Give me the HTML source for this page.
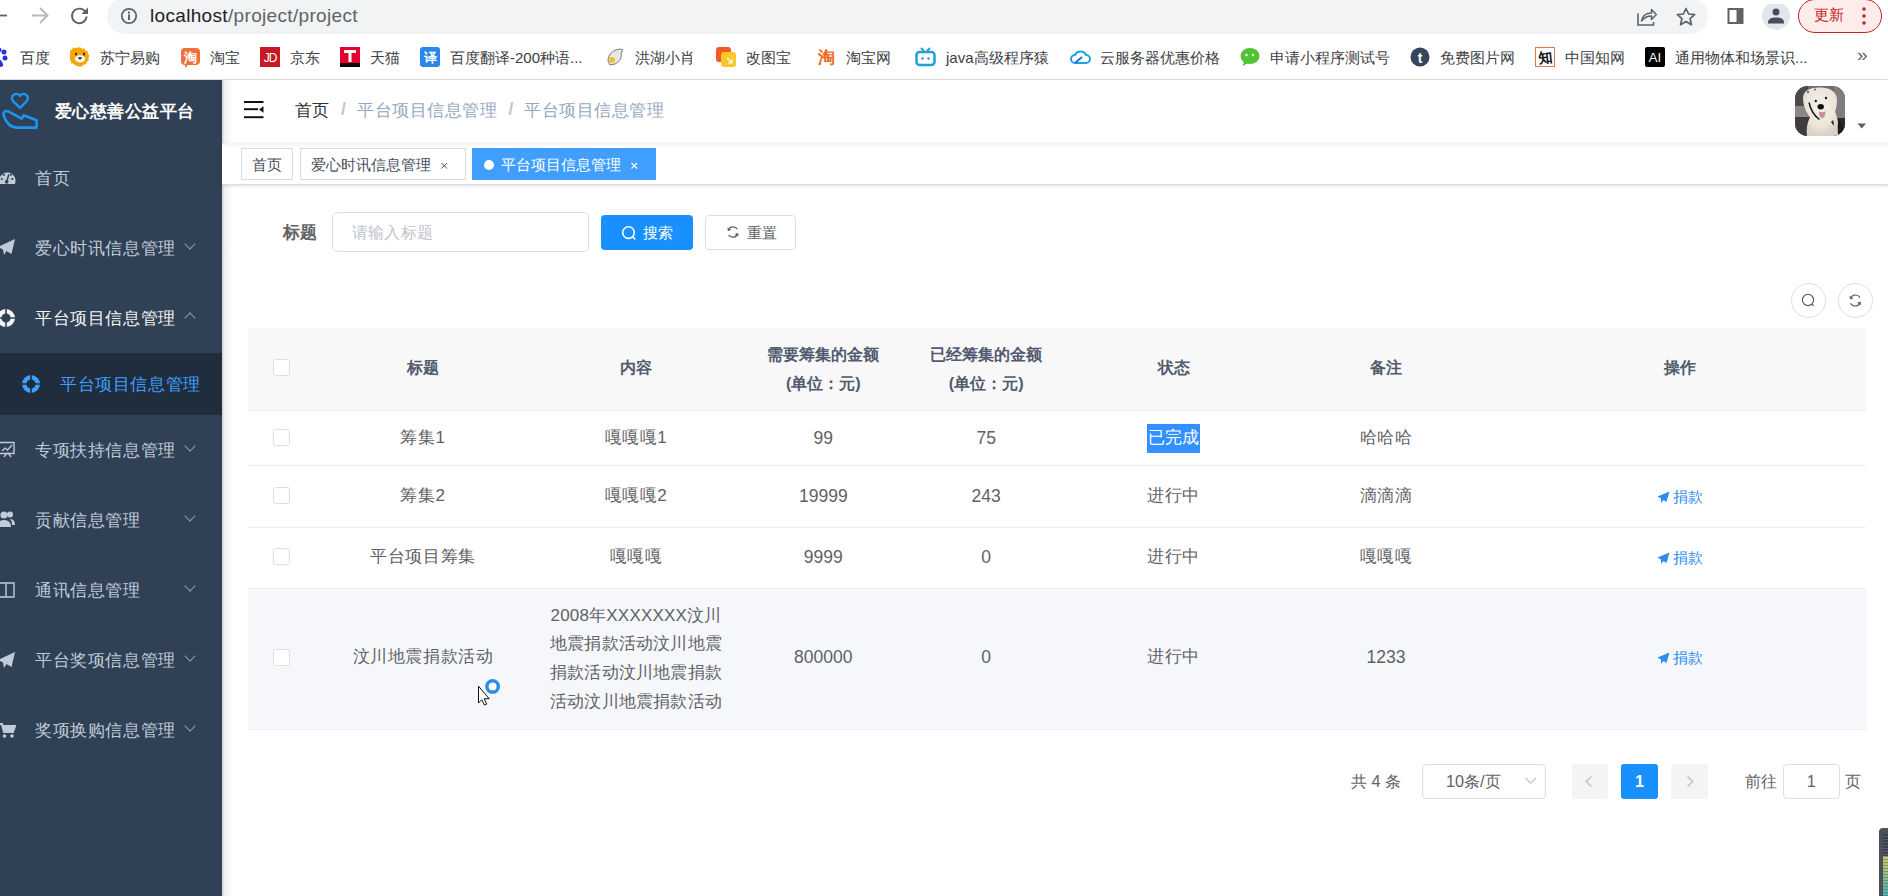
<!DOCTYPE html>
<html><head><meta charset="utf-8">
<style>
*{box-sizing:border-box;margin:0;padding:0}
html,body{width:1888px;height:896px;overflow:hidden;background:#fff;font-family:"Liberation Sans",sans-serif;position:relative}
.a{position:absolute}
.t{white-space:nowrap;line-height:1}
/* browser */
#tb{left:0;top:0;width:1888px;height:36px;background:#fff}
#omni{left:107px;top:-2px;width:1601px;height:36px;border-radius:18px;background:#f1f3f4}
#bm{left:0;top:36px;width:1888px;height:44px;background:#fff;border-bottom:1px solid #dedede}
.bmt{font-size:15px;color:#3c4043;top:49.8px}
/* app */
#side{left:0;top:80px;width:222px;height:816px;background:#304156}
.mi{left:35px;font-size:17px;letter-spacing:0.6px;color:#bfcbd9}
.chev{width:8px;height:8px;border-right:1px solid #909aa6;border-bottom:1px solid #909aa6;transform:rotate(45deg)}
</style></head><body>
<!-- ===== browser toolbar ===== -->
<div class="a" id="tb"></div>
<svg class="a" style="left:0;top:0" width="100" height="36">
  <path d="M-4 15.5H7" stroke="#5f6368" stroke-width="1.8" fill="none"/>
  <path d="M32 15.5H47M40 8l7.5 7.5L40 23" stroke="#b4b6b8" stroke-width="1.8" fill="none"/>
  <path d="M85.5 12A7.3 7.3 0 1 0 86.6 16.5" stroke="#5f6368" stroke-width="1.9" fill="none"/>
  <path d="M88 7.5v6.5h-6.5z" fill="#5f6368"/>
</svg>
<div class="a" id="omni"></div>
<svg class="a" style="left:118px;top:5px" width="22" height="22">
  <circle cx="11" cy="11" r="7.2" stroke="#5f6368" stroke-width="1.8" fill="none"/>
  <rect x="10" y="9.5" width="2" height="5.5" fill="#5f6368"/><rect x="10" y="6.5" width="2" height="2" fill="#5f6368"/>
</svg>
<div class="a t" style="left:150px;top:6px;font-size:19px;letter-spacing:0.33px;color:#202124">localhost<span style="color:#5f6368">/project/project</span></div>

<!-- ===== bookmarks ===== -->
<div class="a" id="bm"></div>
<svg class="a" style="left:0;top:46px" width="10" height="22"><circle cx="4" cy="6" r="2.5" fill="#2932e1"/><circle cx="-1" cy="4" r="2.5" fill="#2932e1"/><circle cx="5" cy="12" r="2.5" fill="#2932e1"/><path d="M-3 12c3 0 5 3 6 6s-2 3-4 3-6-1-6-3 1-6 4-6z" fill="#2932e1"/></svg>
<div class="a t bmt" style="left:20px">百度</div>
<svg class="a" style="left:70px;top:47px" width="20" height="20"><path d="M10 0.3l2 1.4 2.4-.3 1.2 2.1 2.2 1 .1 2.4 1.5 1.9-1 2.2.4 2.4-2 1.3-.6 2.4-2.4.4-1.6 1.8L10 19.7l-2.2-.8-2.4-.4-1.6-1.8-2.4-.4-.6-2.4-2-1.3.4-2.4-1-2.2 1.5-1.9.1-2.4 2.2-1 1.2-2.1 2.4.3z" fill="#f5a60a"/><ellipse cx="10" cy="11.8" rx="5.2" ry="3.6" fill="#fff"/><ellipse cx="6" cy="7" rx="1" ry="1.5" fill="#2a2a2a"/><ellipse cx="14" cy="7" rx="1" ry="1.5" fill="#2a2a2a"/><path d="M7.7 10.3h4.6L10 13z" fill="#1a1a1a"/></svg>
<div class="a t bmt" style="left:100px">苏宁易购</div>
<svg class="a" style="left:180px;top:47px" width="20" height="21"><path d="M4 1h12a4 4 0 0 1 4 4v9a4 4 0 0 1-4 4H8l-3 3v-3a4 4 0 0 1-4-4V5a4 4 0 0 1 3-4z" fill="#f2703a"/><text x="10" y="15" font-size="13" font-weight="bold" fill="#fff" text-anchor="middle">淘</text></svg>
<div class="a t bmt" style="left:210px">淘宝</div>
<svg class="a" style="left:260px;top:47px" width="20" height="20"><rect width="20" height="20" fill="#c71a25"/><text x="10" y="15" font-size="12" font-family="Liberation Sans" fill="#fff" text-anchor="middle" letter-spacing="-1">JD</text></svg>
<div class="a t bmt" style="left:290px">京东</div>
<svg class="a" style="left:340px;top:47px" width="20" height="20"><rect width="20" height="17" fill="#e5002d"/><rect y="16" width="20" height="4" fill="#0a0a0a"/><path d="M4 3h12v3h-4.5v9h-3V6H4z" fill="#fff"/></svg>
<div class="a t bmt" style="left:370px">天猫</div>
<svg class="a" style="left:420px;top:47px" width="20" height="20"><rect width="20" height="20" rx="3" fill="#2b87e8"/><text x="10" y="15" font-size="13" font-weight="bold" fill="#fff" text-anchor="middle">译</text></svg>
<div class="a t bmt" style="left:450px">百度翻译-200种语...</div>
<svg class="a" style="left:605px;top:47px" width="20" height="20"><path d="M3 14c0-6 4-11 12-12l3 1-2 3c1 4-1 9-6 11l-5 1z" fill="#e8e8e8" stroke="#777" stroke-width="1"/><circle cx="7" cy="13" r="3" fill="#f3c21c"/></svg>
<div class="a t bmt" style="left:635px">洪湖小肖</div>
<svg class="a" style="left:716px;top:47px" width="20" height="20"><rect x="0" y="0" width="15" height="15" rx="3" fill="#f25c22"/><rect x="5" y="5" width="15" height="15" rx="3" fill="#fdc629"/><path d="M11 11l5 5M16 12v4h-4" stroke="#fff" stroke-width="1.2" fill="none"/></svg>
<div class="a t bmt" style="left:746px">改图宝</div>
<svg class="a" style="left:817px;top:48px" width="19" height="18"><text x="9.5" y="15" font-size="17" font-weight="bold" fill="#f06a22" text-anchor="middle">淘</text></svg>
<div class="a t bmt" style="left:846px">淘宝网</div>
<svg class="a" style="left:915px;top:47px" width="21" height="20"><path d="M6 1l3 3M15 1l-3 3" stroke="#23a0d9" stroke-width="2"/><rect x="1.5" y="5" width="18" height="13" rx="3" stroke="#23a0d9" stroke-width="2.5" fill="none"/><circle cx="7.5" cy="11.5" r="1.3" fill="#23a0d9"/><circle cx="13.5" cy="11.5" r="1.3" fill="#23a0d9"/></svg>
<div class="a t bmt" style="left:946px">java高级程序猿</div>
<svg class="a" style="left:1070px;top:48px" width="21" height="18"><path d="M5 15a4 4 0 0 1 0-8 6 6 0 0 1 11 0 4 4 0 0 1 0 8z" stroke="#1fa3e8" stroke-width="2" fill="none"/><path d="M5 15l7-6" stroke="#1f6fe8" stroke-width="2"/></svg>
<div class="a t bmt" style="left:1100px">云服务器优惠价格</div>
<svg class="a" style="left:1240px;top:47px" width="20" height="20"><ellipse cx="10" cy="9" rx="9.5" ry="8" fill="#51c332"/><path d="M4 14l-1 5 5-3z" fill="#51c332"/><circle cx="6.5" cy="8" r="1.2" fill="#fff"/><circle cx="13" cy="8" r="1.2" fill="#fff"/></svg>
<div class="a t bmt" style="left:1270px">申请小程序测试号</div>
<svg class="a" style="left:1410px;top:47px" width="20" height="20"><circle cx="10" cy="10" r="9.5" fill="#35465c"/><text x="10" y="15.5" font-size="14" font-weight="bold" font-family="Liberation Sans" fill="#fff" text-anchor="middle">t</text></svg>
<div class="a t bmt" style="left:1440px">免费图片网</div>
<svg class="a" style="left:1535px;top:47px" width="20" height="20"><rect x="0.5" y="0.5" width="19" height="19" fill="#fff" stroke="#e07a45"/><text x="10" y="15.5" font-size="14" font-weight="bold" fill="#111" text-anchor="middle" transform="rotate(-6 10 10)">知</text></svg>
<div class="a t bmt" style="left:1565px">中国知网</div>
<svg class="a" style="left:1645px;top:47px" width="20" height="20"><rect width="20" height="20" rx="2" fill="#000"/><text x="10" y="15" font-size="13" font-family="Liberation Sans" fill="#fff" text-anchor="middle">AI</text></svg>
<div class="a t bmt" style="left:1675px">通用物体和场景识...</div>
<div class="a t" style="left:1857px;top:45px;font-size:19px;color:#5f6368">»</div>
<!-- right toolbar icons -->
<svg class="a" style="left:1630px;top:4px" width="250" height="32">
  <path d="M8 9.5v11.5h15.5v-3" stroke="#5f6368" stroke-width="1.6" fill="none"/>
  <path d="M11.5 17c1-5.5 4.5-8 10-8V5.5l4.8 5-4.8 5v-3.5c-4 0-7 1-10 5z" stroke="#5f6368" stroke-width="1.5" fill="none" stroke-linejoin="round"/>
  <path d="M56 4.5l2.6 5.5 6 .7-4.5 4 1.3 6-5.4-3.2-5.4 3.2 1.3-6-4.5-4 6-.7z" stroke="#5f6368" stroke-width="1.7" fill="none" stroke-linejoin="round"/>
  <rect x="97.5" y="4" width="16" height="16" fill="#5f6368"/><rect x="99.5" y="6" width="7" height="12" fill="#fff"/>
  <circle cx="146" cy="11.8" r="14" fill="#e3e6ea"/>
  <circle cx="146" cy="8" r="3.5" fill="#474f5d"/><path d="M138 18.5c0-4 4-5 8-5s8 1 8 5v1h-16z" fill="#474f5d"/>
</svg>
<div class="a" style="left:1798px;top:-1px;width:84px;height:34px;border-radius:17px;border:1.5px solid #c5221f;background:#fdecea"></div>
<div class="a t" style="left:1814px;top:7px;font-size:15px;color:#c5221f">更新</div>
<svg class="a" style="left:1860px;top:6px" width="8" height="22"><circle cx="4" cy="3" r="1.8" fill="#c5221f"/><circle cx="4" cy="10" r="1.8" fill="#c5221f"/><circle cx="4" cy="17" r="1.8" fill="#c5221f"/></svg>

<!-- ===== sidebar ===== -->
<div class="a" id="side"></div>
<svg class="a" style="left:0;top:90px" width="42" height="42">
  <path d="M19.9 17.8L13.3 11.3A4.3 4.3 0 1 1 19.9 5.9A4.3 4.3 0 1 1 26.5 11.3Z" stroke="#1c95ef" stroke-width="2.4" fill="none" stroke-linejoin="round"/>
  <path d="M3.6 25.5Q3 21.3 6.2 21.1Q8.3 21 11 22.8L21.8 28.6L23.6 25.3L36.6 30.2V37.6H16.5Q8 37.4 3.6 25.5Z" stroke="#1c95ef" stroke-width="2.6" fill="none" stroke-linejoin="round"/>
</svg>
<div class="a t" style="left:55px;top:102.5px;font-size:17px;letter-spacing:0.43px;font-weight:bold;color:#fff">爱心慈善公益平台</div>
<div class="a" style="left:0;top:352.5px;width:222px;height:62.5px;background:#1f2d3d"></div>

<svg class="a" style="left:0;top:168px" width="16" height="18"><path d="M-0.2 16A8.2 8.2 0 1 1 14.8 16Z" fill="#bfcbd9"/><circle cx="1.8" cy="11" r="1.1" fill="#304156"/><circle cx="3.8" cy="6.8" r="1.1" fill="#304156"/><circle cx="12.3" cy="11" r="1.1" fill="#304156"/><circle cx="10.8" cy="6.8" r="1.1" fill="#304156"/><path d="M8.8 6.5L6.9 13" stroke="#304156" stroke-width="1.4"/><circle cx="6.7" cy="13.8" r="1.9" fill="#304156"/></svg>
<div class="a t mi" style="top:169.7px">首页</div>

<svg class="a" style="left:0;top:238px" width="16" height="18"><path d="M15 1L-2 9l5 2.5zM15 1L3 11.5l1 5.5 2.5-4 5 3z" fill="#bfcbd9"/></svg>
<div class="a t mi" style="top:239.7px">爱心时讯信息管理</div>
<div class="a chev" style="left:186px;top:240px"></div>

<svg class="a" style="left:-4px;top:308px" width="20" height="20"><circle cx="10" cy="10" r="6.8" stroke="#f4f4f5" stroke-width="4.4" fill="none"/><path d="M10 0v20M0 10h20" stroke="#304156" stroke-width="1.6"/></svg>
<div class="a t mi" style="top:309.7px;color:#f4f4f5">平台项目信息管理</div>
<div class="a chev" style="left:186px;top:314px;transform:rotate(225deg)"></div>

<svg class="a" style="left:21px;top:373.5px" width="20" height="20"><circle cx="10" cy="10" r="6.8" stroke="#409eff" stroke-width="4.4" fill="none"/><path d="M10 0v20M0 10h20" stroke="#1f2d3d" stroke-width="1.6"/></svg>
<div class="a t mi" style="left:60px;top:375.7px;color:#409eff">平台项目信息管理</div>

<svg class="a" style="left:0;top:441px" width="16" height="18"><path d="M-1 1.5h15v11H-1" stroke="#bfcbd9" stroke-width="1.4" fill="none"/><path d="M2 10l3-3 2.5 2 4.5-5" stroke="#bfcbd9" stroke-width="1.3" fill="none"/><path d="M4 16l2.5-3.5h2L11 16" stroke="#bfcbd9" stroke-width="1.3" fill="none"/></svg>
<div class="a t mi" style="top:441.7px">专项扶持信息管理</div>
<div class="a chev" style="left:186px;top:442px"></div>

<svg class="a" style="left:0;top:510px" width="16" height="18"><circle cx="4" cy="5" r="3.6" fill="#bfcbd9"/><circle cx="10" cy="4.5" r="3" fill="#bfcbd9"/><path d="M-3 17c0-5 3-7 7-7s7 2 7 7z" fill="#bfcbd9"/><path d="M10 9c3 0 5 2 5 6h-3c0-3-1-5-2-6z" fill="#bfcbd9"/></svg>
<div class="a t mi" style="top:511.7px">贡献信息管理</div>
<div class="a chev" style="left:186px;top:512px"></div>

<svg class="a" style="left:0;top:581px" width="16" height="18"><path d="M-2 2h8v14h-8M6 2h8v14H6z" stroke="#bfcbd9" stroke-width="1.4" fill="none"/></svg>
<div class="a t mi" style="top:581.7px">通讯信息管理</div>
<div class="a chev" style="left:186px;top:582px"></div>

<svg class="a" style="left:0;top:651px" width="16" height="18"><path d="M15 1L-2 9l5 2.5zM15 1L3 11.5l1 5.5 2.5-4 5 3z" fill="#bfcbd9"/></svg>
<div class="a t mi" style="top:651.7px">平台奖项信息管理</div>
<div class="a chev" style="left:186px;top:652px"></div>

<svg class="a" style="left:0;top:721px" width="16" height="18"><path d="M-2 3h4l2 8h9l2-6H3" stroke="#bfcbd9" stroke-width="2" fill="#bfcbd9"/><circle cx="4.5" cy="15" r="1.8" fill="#bfcbd9"/><circle cx="12" cy="15" r="1.8" fill="#bfcbd9"/></svg>
<div class="a t mi" style="top:721.7px">奖项换购信息管理</div>
<div class="a chev" style="left:186px;top:722px"></div>

<!-- ===== navbar ===== -->
<div class="a" style="left:222px;top:80px;width:1666px;height:62.5px;background:#fff;box-shadow:0 1px 5px rgba(0,21,41,.08)"></div>
<div class="a" style="left:222px;top:80px;width:11px;height:816px;background:linear-gradient(90deg,rgba(0,21,41,.2) 0,rgba(0,21,41,.07) 2.5px,rgba(0,21,41,.03) 6px,rgba(0,21,41,0) 11px)"></div>
<svg class="a" style="left:243px;top:100px" width="22" height="20">
  <rect x="1" y="1" width="19.5" height="2" fill="#111"/>
  <rect x="1" y="8.2" width="14" height="2" fill="#111"/>
  <path d="M20.5 6.3v6.4l-4.5-3.2z" fill="#111"/>
  <rect x="1" y="16.2" width="19.5" height="2" fill="#111"/>
</svg>
<div class="a t" style="left:295px;top:102px;font-size:17px;color:#303133">首页</div>
<div class="a t" style="left:341px;top:101px;font-size:17.5px;color:#c0c4cc;font-weight:bold">/</div>
<div class="a t" style="left:357px;top:102px;font-size:17px;letter-spacing:0.55px;color:#97a8be">平台项目信息管理</div>
<div class="a t" style="left:508.5px;top:101px;font-size:17.5px;color:#c0c4cc;font-weight:bold">/</div>
<div class="a t" style="left:524px;top:102px;font-size:17px;letter-spacing:0.55px;color:#97a8be">平台项目信息管理</div>
<svg class="a" style="left:1795px;top:86px" width="50" height="50">
  <defs><clipPath id="av"><rect width="50" height="50" rx="12.5"/></clipPath>
  <radialGradient id="dg" cx=".5" cy=".4" r=".6"><stop offset="0" stop-color="#f3efe6"/><stop offset=".7" stop-color="#ebe6da"/><stop offset="1" stop-color="#d8d1c6"/></radialGradient>
  <filter id="bl"><feGaussianBlur stdDeviation="0.6"/></filter></defs>
  <g clip-path="url(#av)">
    <rect width="50" height="50" fill="#6f6a6b"/>
    <rect x="0" y="0" width="13" height="21" fill="#4e4a4b"/>
    <rect x="0" y="20" width="15" height="11" fill="#8c8687"/>
    <rect x="0" y="31" width="15" height="19" fill="#3f3c3d"/>
    <rect x="39" y="0" width="11" height="50" fill="#827c7d"/>
    <rect x="40" y="32" width="10" height="18" fill="#2a2829"/>
    <g filter="url(#bl)">
    <path d="M8 12C8 4 16 1 26 1.5 36 2 42 6 42 14c0 5-1 9-2 12 3 6 4 14 3 24H12c-1-6 0-13 3-19-4-5-7-12-7-19z" fill="url(#dg)"/>
    <path d="M44 33c3 5 5 10 6 17h-7c0-6-1-12 1-17z" fill="#1e1c1d"/>
    <circle cx="13" cy="6" r="1" fill="#444"/><circle cx="20" cy="3.5" r="0.9" fill="#555"/>
    <circle cx="31" cy="12" r="1.2" fill="#1a1a1a"/><circle cx="20.8" cy="15" r="1.2" fill="#1a1a1a"/>
    <ellipse cx="25.7" cy="20.8" rx="3.2" ry="2.7" fill="#0e0e0e"/>
    <path d="M24 25.5c2 1 4 1 6.5-.3 0 3-1 7-3.3 7-2 0-3.2-3-3.2-6.7z" fill="#c98e99"/>
    <path d="M14 16.5c1.5 7 5 13 10.5 17" stroke="#1a1a1a" stroke-width="1.5" fill="none"/>
    <path d="M36 36l2.2-2 0.8 6z" fill="#1a1a1a"/>
    </g>
  </g>
</svg>
<svg class="a" style="left:1857px;top:123px" width="10" height="6"><path d="M0.5 0.5h8.5l-4.25 5z" fill="#5a5e66"/></svg>

<!-- ===== tags view ===== -->
<div class="a" style="left:222px;top:142.5px;width:1666px;height:42.5px;background:#fff;border-bottom:1px solid #d8dce5;box-shadow:0 1px 3px 0 rgba(0,0,0,.12),0 0 3px 0 rgba(0,0,0,.04)"></div>
<div class="a" style="left:222px;top:142.5px;width:1666px;height:5px;background:linear-gradient(180deg,rgba(0,21,41,.06),rgba(0,21,41,0))"></div>
<div class="a" style="left:241px;top:148px;width:52px;height:32px;border:1px solid #d8dce5;background:#fff"></div>
<div class="a t" style="left:252px;top:156.5px;font-size:15px;color:#495060">首页</div>
<div class="a" style="left:300px;top:148px;width:166px;height:32px;border:1px solid #d8dce5;background:#fff"></div>
<div class="a t" style="left:311px;top:156.5px;font-size:15px;color:#495060">爱心时讯信息管理</div>
<svg class="a" style="left:440px;top:161px" width="9" height="9"><path d="M1.5 2l5.5 5.5M7 2L1.5 7.5" stroke="#495060" stroke-width="1"/></svg>
<div class="a" style="left:472px;top:148px;width:184px;height:32px;background:#409eff;border:1px solid #409eff"></div>
<div class="a" style="left:484px;top:159.5px;width:10px;height:10px;border-radius:50%;background:#fff"></div>
<div class="a t" style="left:501px;top:156.5px;font-size:15px;color:#fff">平台项目信息管理</div>
<svg class="a" style="left:630px;top:161px" width="9" height="9"><path d="M1.5 2l5.5 5.5M7 2L1.5 7.5" stroke="#fff" stroke-width="1.2"/></svg>

<!-- ===== search form ===== -->
<div class="a t" style="left:282.5px;top:223.5px;font-size:17px;font-weight:bold;color:#606266">标题</div>
<div class="a" style="left:332px;top:212px;width:257px;height:40px;border:1px solid #dcdfe6;border-radius:5px;background:#fff"></div>
<div class="a t" style="left:352px;top:224.5px;font-size:16px;letter-spacing:0.2px;color:#c0c4cc">请输入标题</div>
<div class="a" style="left:601px;top:215px;width:92px;height:35px;border-radius:4px;background:#1890ff"></div>
<svg class="a" style="left:620px;top:225px" width="18" height="16"><circle cx="8.5" cy="7.6" r="5.8" stroke="#fff" stroke-width="1.6" fill="none"/><path d="M12.6 11.8l2.6 2.6" stroke="#fff" stroke-width="1.6"/></svg>
<div class="a t" style="left:643px;top:225px;font-size:15px;color:#fff">搜索</div>
<div class="a" style="left:705px;top:215px;width:91px;height:35px;border-radius:4px;border:1px solid #dcdfe6;background:#fff"></div>
<svg class="a" style="left:725px;top:224px" width="16" height="16"><path d="M3.2 6.5A5 5 0 0 1 12.3 5.2M12.8 9.5A5 5 0 0 1 3.7 10.8" stroke="#606266" stroke-width="1.3" fill="none"/><path d="M2.3 3.5l.8 3.6 3.3-1.2zM13.7 12.5l-.8-3.6-3.3 1.2z" fill="#606266"/></svg>
<div class="a t" style="left:747px;top:225px;font-size:15px;color:#606266">重置</div>

<!-- right toolbar -->
<div class="a" style="left:1791px;top:283px;width:35px;height:35px;border-radius:50%;border:1px solid #dcdfe6;background:#fff"></div>
<svg class="a" style="left:1800px;top:292px" width="17" height="17"><circle cx="8" cy="8" r="5.6" stroke="#606266" stroke-width="1.2" fill="none"/><path d="M11.8 12l1.8 1.8" stroke="#606266" stroke-width="1.2"/></svg>
<div class="a" style="left:1838px;top:283px;width:35px;height:35px;border-radius:50%;border:1px solid #dcdfe6;background:#fff"></div>
<svg class="a" style="left:1847px;top:292px" width="17" height="17"><path d="M3.3 7A5.3 5.3 0 0 1 13 5.6M13.3 10A5.3 5.3 0 0 1 3.6 11.4" stroke="#606266" stroke-width="1.2" fill="none"/><path d="M2.4 3.8l.9 3.7 3.3-1.2zM14.2 13.2l-.9-3.7-3.3 1.2z" fill="#606266"/></svg>

<!-- ===== table ===== -->
<style>
.cell{display:flex;align-items:center;justify-content:center;text-align:center;font-size:17.5px;color:#606266;line-height:28.75px}
.hc{font-size:16.25px;font-weight:bold;color:#515a6e}
.cb{width:17px;height:17px;border:1px solid #dcdfe6;border-radius:2.5px;background:#fff}
.link{color:#2d8cf0;font-size:15px;line-height:1}
.cj{font-size:17px;letter-spacing:0.55px}
</style>
<div class="a" style="left:247.5px;top:328px;width:1618.5px;height:82.5px;background:#f8f8f9;border-bottom:1px solid #ebeef5"></div>
<div class="a" style="left:247.5px;top:465px;width:1618.5px;height:1px;background:#ebeef5"></div>
<div class="a" style="left:247.5px;top:527px;width:1618.5px;height:1px;background:#ebeef5"></div>
<div class="a" style="left:247.5px;top:588px;width:1618.5px;height:141.5px;background:#f5f7fa;border-top:1px solid #ebeef5;border-bottom:1px solid #ebeef5"></div>
<div class="a cell" style="padding-bottom:3px;left:248.00px;top:328px;width:67px;height:82.5px;"><div><div class="cb"></div></div></div>
<div class="a cell" style="left:316.50px;top:328px;width:213px;height:82.5px;padding-bottom:3px"><div><span class="hc">标题</span></div></div>
<div class="a cell" style="left:529.50px;top:328px;width:213px;height:82.5px;padding-bottom:3px"><div><span class="hc">内容</span></div></div>
<div class="a cell" style="left:741.80px;top:328px;width:163px;height:82.5px;padding-bottom:1px"><div><span class="hc">需要筹集的金额<br>(单位：元)</span></div></div>
<div class="a cell" style="left:904.70px;top:328px;width:163px;height:82.5px;padding-bottom:1px"><div><span class="hc">已经筹集的金额<br>(单位：元)</span></div></div>
<div class="a cell" style="left:1067.00px;top:328px;width:213px;height:82.5px;padding-bottom:3px"><div><span class="hc">状态</span></div></div>
<div class="a cell" style="left:1279.50px;top:328px;width:213px;height:82.5px;padding-bottom:3px"><div><span class="hc">备注</span></div></div>
<div class="a cell" style="left:1493.20px;top:328px;width:373px;height:82.5px;padding-bottom:3px"><div><span class="hc">操作</span></div></div>
<div class="a cell" style="padding-bottom:2px;left:248.00px;top:410.5px;width:67px;height:55px;"><div><div class="cb"></div></div></div>
<div class="a cell" style="left:316.50px;top:410.5px;width:213px;height:55px;"><div class="cj">筹集1</div></div>
<div class="a cell" style="left:529.50px;top:410.5px;width:213px;height:55px;"><div class="cj">嘎嘎嘎1</div></div>
<div class="a cell" style="left:741.80px;top:410.5px;width:163px;height:55px;"><div>99</div></div>
<div class="a cell" style="left:904.70px;top:410.5px;width:163px;height:55px;"><div>75</div></div>
<div class="a cell" style="left:1067.00px;top:410.5px;width:213px;height:55px;"><div><span class="cj" style="display:inline-block;height:28.75px;line-height:28.75px;background:#3390ff;color:#fff;letter-spacing:0;padding:0 0.5px">已<span style="letter-spacing:0.55px">完</span>成</span></div></div>
<div class="a cell" style="left:1279.50px;top:410.5px;width:213px;height:55px;"><div class="cj">哈哈哈</div></div>
<div class="a cell" style="left:1493.20px;top:410.5px;width:373px;height:55px;"><div></div></div>
<div class="a cell" style="padding-bottom:2px;left:248.00px;top:465.5px;width:67px;height:61.5px;"><div><div class="cb"></div></div></div>
<div class="a cell" style="left:316.50px;top:465.5px;width:213px;height:61.5px;"><div class="cj">筹集2</div></div>
<div class="a cell" style="left:529.50px;top:465.5px;width:213px;height:61.5px;"><div class="cj">嘎嘎嘎2</div></div>
<div class="a cell" style="left:741.80px;top:465.5px;width:163px;height:61.5px;"><div>19999</div></div>
<div class="a cell" style="left:904.70px;top:465.5px;width:163px;height:61.5px;"><div>243</div></div>
<div class="a cell" style="left:1067.00px;top:465.5px;width:213px;height:61.5px;"><div class="cj">进行中</div></div>
<div class="a cell" style="left:1279.50px;top:465.5px;width:213px;height:61.5px;"><div class="cj">滴滴滴</div></div>
<div class="a cell" style="left:1493.20px;top:465.5px;width:373px;height:61.5px;"><div><svg width="13" height="12" style="vertical-align:-1px;margin-right:3px"><path d="M12.5 0.5L0.5 5.5l3.5 2zM12.5 0.5L4 7.5l0 4.5 2.5-3 3 2z" fill="#2d8cf0"/></svg><span class="link">捐款</span></div></div>
<div class="a cell" style="padding-bottom:2px;left:248.00px;top:527px;width:67px;height:61px;"><div><div class="cb"></div></div></div>
<div class="a cell" style="left:316.50px;top:527px;width:213px;height:61px;"><div class="cj">平台项目筹集</div></div>
<div class="a cell" style="left:529.50px;top:527px;width:213px;height:61px;"><div class="cj">嘎嘎嘎</div></div>
<div class="a cell" style="left:741.80px;top:527px;width:163px;height:61px;"><div>9999</div></div>
<div class="a cell" style="left:904.70px;top:527px;width:163px;height:61px;"><div>0</div></div>
<div class="a cell" style="left:1067.00px;top:527px;width:213px;height:61px;"><div class="cj">进行中</div></div>
<div class="a cell" style="left:1279.50px;top:527px;width:213px;height:61px;"><div class="cj">嘎嘎嘎</div></div>
<div class="a cell" style="left:1493.20px;top:527px;width:373px;height:61px;"><div><svg width="13" height="12" style="vertical-align:-1px;margin-right:3px"><path d="M12.5 0.5L0.5 5.5l3.5 2zM12.5 0.5L4 7.5l0 4.5 2.5-3 3 2z" fill="#2d8cf0"/></svg><span class="link">捐款</span></div></div>
<div class="a cell" style="padding-bottom:2.4px;left:248.00px;top:588.5px;width:67px;height:141px;"><div><div class="cb"></div></div></div>
<div class="a cell" style="left:316.50px;top:588.5px;width:213px;height:141px;padding-bottom:2.4px;"><div class="cj">汶川地震捐款活动</div></div>
<div class="a cell" style="left:529.50px;top:588.5px;width:213px;height:141px;"><div class="cj" style="letter-spacing:0.2px">2008年XXXXXXX汶川<br>地震捐款活动汶川地震<br>捐款活动汶川地震捐款<br>活动汶川地震捐款活动</div></div>
<div class="a cell" style="left:741.80px;top:588.5px;width:163px;height:141px;padding-bottom:2.4px;"><div>800000</div></div>
<div class="a cell" style="left:904.70px;top:588.5px;width:163px;height:141px;padding-bottom:2.4px;"><div>0</div></div>
<div class="a cell" style="left:1067.00px;top:588.5px;width:213px;height:141px;padding-bottom:2.4px;"><div class="cj">进行中</div></div>
<div class="a cell" style="left:1279.50px;top:588.5px;width:213px;height:141px;padding-bottom:2.4px;"><div>1233</div></div>
<div class="a cell" style="left:1493.20px;top:588.5px;width:373px;height:141px;padding-bottom:2.4px;"><div><svg width="13" height="12" style="vertical-align:-1px;margin-right:3px"><path d="M12.5 0.5L0.5 5.5l3.5 2zM12.5 0.5L4 7.5l0 4.5 2.5-3 3 2z" fill="#2d8cf0"/></svg><span class="link">捐款</span></div></div>

<!-- cursor -->
<svg class="a" style="left:476px;top:678px" width="26" height="30">
  <path d="M2.5 8.2V25l3.3-3.3 2.6 5.4 2.3-1-2.5-5.4h5z" fill="#fff" stroke="#111" stroke-width="1" stroke-linejoin="round"/>
  <circle cx="16.6" cy="8.4" r="5.7" stroke="#2a8de6" stroke-width="3.5" fill="#fff"/>
</svg>

<!-- ===== pagination ===== -->
<div class="a t" style="left:1351px;top:772.5px;font-size:16.25px;color:#606266">共 4 条</div>
<div class="a" style="left:1421.5px;top:764px;width:124.5px;height:34.5px;border:1px solid #dcdfe6;border-radius:4px;background:#fff"></div>
<div class="a t" style="left:1446px;top:772.5px;font-size:16.25px;color:#606266">10条/页</div>
<svg class="a" style="left:1524px;top:776px" width="14" height="9"><path d="M1.5 2l5.2 5.2L12 2" stroke="#c0c4cc" stroke-width="1.3" fill="none"/></svg>
<div class="a" style="left:1571.5px;top:764px;width:36.5px;height:34.5px;border-radius:2.5px;background:#f4f4f5"></div>
<svg class="a" style="left:1583px;top:775px" width="12" height="13"><path d="M8.5 1.5L3.3 6.5l5.2 5" stroke="#c0c4cc" stroke-width="1.6" fill="none"/></svg>
<div class="a" style="left:1621px;top:764px;width:37px;height:34.5px;border-radius:3px;background:#1890ff"></div>
<div class="a t" style="left:1621px;top:773px;width:37px;text-align:center;font-size:16.25px;font-weight:bold;color:#fff">1</div>
<div class="a" style="left:1671px;top:764px;width:37px;height:34.5px;border-radius:2.5px;background:#f4f4f5"></div>
<svg class="a" style="left:1684px;top:775px" width="12" height="13"><path d="M3.5 1.5l5.2 5-5.2 5" stroke="#c0c4cc" stroke-width="1.6" fill="none"/></svg>
<div class="a t" style="left:1745px;top:772.5px;font-size:16.25px;color:#606266">前往</div>
<div class="a" style="left:1782.5px;top:764px;width:57.5px;height:34.5px;border:1px solid #dcdfe6;border-radius:4px;background:#fff"></div>
<div class="a t" style="left:1782.5px;top:773px;width:57.5px;text-align:center;font-size:16.25px;color:#606266">1</div>
<div class="a t" style="left:1844.5px;top:772.5px;font-size:16.25px;color:#606266">页</div>

<!-- corner widget -->
<div class="a" style="left:1879px;top:828px;width:20px;height:80px;border-radius:4px 0 0 0;background:#4c4f5c"></div>
<div class="a" style="left:1883px;top:834px;width:10px;height:22px;background:repeating-linear-gradient(180deg,#3d404c 0 2px,#5a5d6a 2px 3px)"></div>
<div class="a" style="left:1883px;top:856px;width:10px;height:40px;background:repeating-linear-gradient(180deg,rgba(60,63,75,.35) 0 1px,rgba(0,0,0,0) 1px 3px),linear-gradient(180deg,#c7c56c 0,#a9c27a 35%,#6fb99a 70%,#52b3a8 100%)"></div>
</body></html>
